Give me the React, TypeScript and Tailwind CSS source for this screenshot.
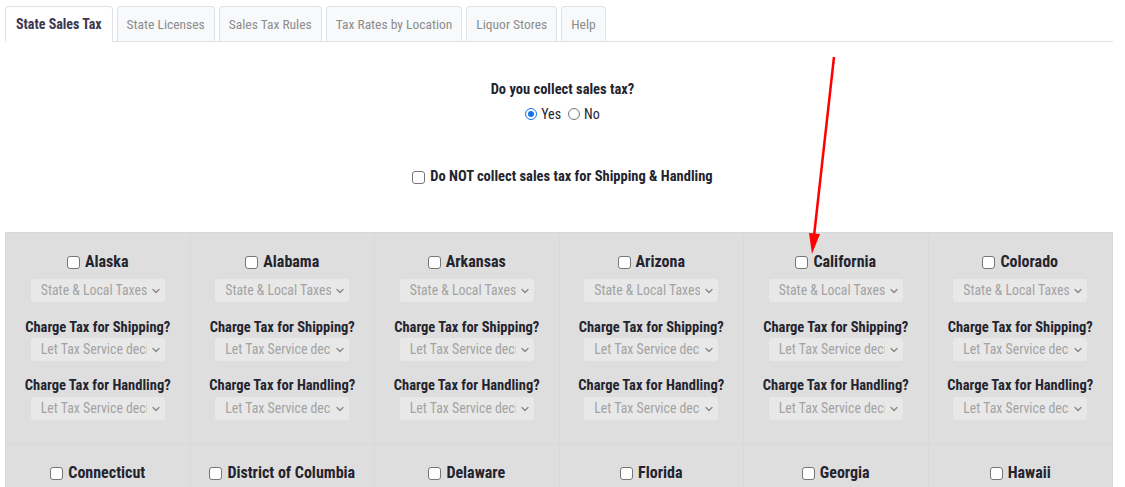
// Sales tax settings screen: tab bar, global options and per-state grid

const TABS = ['State Sales Tax', 'State Licenses', 'Sales Tax Rules', 'Tax Rates by Location', 'Liquor Stores', 'Help'];

const STATES = [
  'Alaska', 'Alabama', 'Arkansas', 'Arizona', 'California', 'Colorado',
  'Connecticut', 'District of Columbia', 'Delaware', 'Florida', 'Georgia', 'Hawaii',
];

function Chevron() {
  return (
    <svg width="10" height="10" viewBox="0 0 10 10" className="shrink-0">
      <path d="M2 3.5 L5 6.5 L8 3.5" fill="none" stroke="#8a8a8a" strokeWidth="1.4" strokeLinecap="round" />
    </svg>
  );
}

function FakeSelect({ value }: { value: string }) {
  return (
    <div className="w-[134px] h-[23px] bg-[#e8e8e8] rounded-[3px] flex items-center pl-[10px] pr-[4px] gap-[4px]">
      <span className="w-[106px] overflow-hidden whitespace-nowrap text-[13.8px] text-[#a3a3a3] leading-none">{value}</span>
      <Chevron />
    </div>
  );
}

function Box() {
  return <span className="inline-block w-[13px] h-[13px] rounded-[3px] border border-[#767676] bg-white shrink-0" />;
}

function StateCell({ name }: { name: string }) {
  return (
    <div className="flex flex-col items-center pt-[20px] pb-[23px] border-r border-b border-[#d6dade] bg-[#dedede] whitespace-nowrap">
      <div className="flex items-center gap-[5px] h-[18px]">
        <Box />
        <span className="text-[16px] font-bold text-[#24242e]">{name}</span>
      </div>
      <div className="mt-[8px]">
        <FakeSelect value="State & Local Taxes" />
      </div>
      <div className="mt-[17px] h-[18px] text-[14.5px] font-bold text-[#24242e] leading-[18px]">Charge Tax for Shipping?</div>
      <div className="mt-[1px]">
        <FakeSelect value="Let Tax Service decide" />
      </div>
      <div className="mt-[16px] h-[18px] text-[14.5px] font-bold text-[#24242e] leading-[18px]">Charge Tax for Handling?</div>
      <div className="mt-[2px]">
        <FakeSelect value="Let Tax Service decide" />
      </div>
    </div>
  );
}

export default function App() {
  return (
    <div className="relative w-[1125px] h-[487px] overflow-hidden bg-white font-['Roboto_Condensed',Roboto,sans-serif]">
      {/* Tabs */}
      <div className="ml-[5px] w-[1108px] pt-[6px] flex items-end gap-[4px] border-b border-[#dee2e6]">
        {TABS.map((t, i) => (
          <div
            key={t}
            className={
              i === 0
                ? 'h-[36px] px-[10px] flex items-center text-[14px] font-bold text-[#3b3552] bg-white border border-[#dee2e6] border-b-white rounded-t-[4px] -mb-px'
                : 'h-[35px] px-[9px] flex items-center text-[13.5px] text-[#8c8c8c] bg-[#f8f9fa] border border-b-0 border-[#dee2e6] rounded-t-[4px]'
            }
          >
            {t}
          </div>
        ))}
      </div>

      {/* Global options */}
      <div className="flex flex-col items-center text-[#24242e]">
        <div className="mt-[39px] text-[14.5px] font-bold leading-[18px]">Do you collect sales tax?</div>
        <div className="mt-[6px] flex items-center gap-[4px] text-[14px] leading-[18px]">
          <span className="inline-flex items-center justify-center w-[12px] h-[12px] rounded-full border border-[#1a73e8]">
            <span className="w-[6px] h-[6px] rounded-full bg-[#1a73e8]" />
          </span>
          <span>Yes</span>
          <span className="ml-[3px] inline-block w-[12px] h-[12px] rounded-full border border-[#767676]" />
          <span>No</span>
        </div>
        <div className="mt-[45px] flex items-center gap-[5px]">
          <Box />
          <span className="text-[14.5px] font-bold leading-[18px]">Do NOT collect sales tax for Shipping &amp; Handling</span>
        </div>
      </div>

      {/* State grid */}
      <div className="mt-[46px] ml-[5px] w-[1108px] grid grid-cols-6 border-t border-l border-[#d6dade]">
        {STATES.map((s) => (
          <StateCell key={s} name={s} />
        ))}
      </div>

      {/* Red annotation arrow */}
      <svg className="absolute left-0 top-0 pointer-events-none" width="1125" height="487">
        <line x1="834" y1="57" x2="814" y2="236" stroke="#ff0000" strokeWidth="2.5" />
        <polygon points="809,233 820,234 812,254" fill="#ff0000" />
      </svg>
    </div>
  );
}
